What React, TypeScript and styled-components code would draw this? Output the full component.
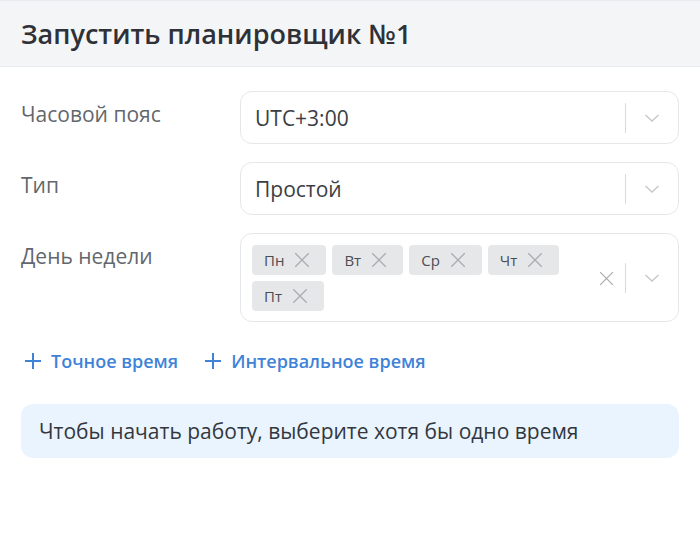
import React from "react";
import styled, {createGlobalStyle} from "styled-components";

const GlobalStyle = createGlobalStyle`
  html, body {
    margin: 0;
    padding: 0;
    background: #fff;
    font-family: "Open Sans", "Noto Sans", sans-serif;
  }
`

const Wrapper = styled.div`
  width: 700px;
  height: 536px;
  overflow: hidden;
  background: #fff;
`

const Header = styled.div`
  height: 67px;
  box-sizing: border-box;
  background: #f4f5f7;
  border-top: 1px solid #e9ebee;
  border-bottom: 1px solid #e8eaed;
  padding-left: 21px;
  display: flex;
  align-items: center;
`

const Title = styled.h1`
  margin: 0;
  font-size: 27px;
  font-weight: 600;
  color: #2e3238;
`

const Content = styled.div`
  padding: 24px 21px 0;
`

const Form = styled.div`
  display: flex;
  flex-direction: column;
  gap: 18px;
`

const Row = styled.div`
  display: grid;
  grid-template-columns: 219px 1fr;
`

const Label = styled.label`
  font-size: 21px;
  line-height: 27px;
  padding-top: 10px;
  color: #63676c;
`

const Control = styled.div<{$multi?: boolean}>`
  min-height: 53px;
  box-sizing: border-box;
  border: 1px solid #e5e7ea;
  border-radius: 12px;
  display: flex;
  align-items: center;
  padding: ${props => (props.$multi ? "11px 0 10px 11px" : "0 0 0 14px")};
`

const Value = styled.div`
  flex: 1;
  font-size: 21px;
  color: #3a3e44;
`

const Tags = styled.div`
  flex: 1;
  display: flex;
  flex-wrap: wrap;
  gap: 6px;
`

const Tag = styled.div`
  height: 30px;
  box-sizing: border-box;
  background: #e6e7e9;
  border-radius: 4px;
  padding: 0 15px 1px 12px;
  display: flex;
  align-items: center;
  gap: 9px;
  font-size: 15px;
  color: #4a4e54;
`

const Indicators = styled.div`
  display: flex;
  align-items: center;
  padding-right: 18px;
`

const Divider = styled.span`
  width: 1px;
  height: 30px;
  background: #d9dbde;
  margin: 0 18px 0 10px;
`

const Actions = styled.div`
  display: flex;
  gap: 26px;
  margin-top: 27px;
  padding-left: 3px;
`

const AddButton = styled.button`
  border: none;
  background: none;
  padding: 0;
  display: flex;
  align-items: center;
  gap: 9px;
  font-family: inherit;
  font-size: 18px;
  line-height: 24px;
  font-weight: 600;
  color: #3f83d8;
`

const Notice = styled.div`
  margin-top: 31px;
  height: 54px;
  border-radius: 12px;
  background: #eaf4fe;
  padding-left: 18px;
  display: flex;
  align-items: center;
  font-size: 21px;
  color: #33373d;
`

const Cross = ({size}: {size: number}) => (
    <svg width={size} height={size} viewBox="0 0 16 16" fill="none" stroke="#a9acb0" strokeWidth="1.2">
        <path d="M2 2 14 14M14 2 2 14"/>
    </svg>
)

const Chevron = () => (
    <svg width="16" height="10" viewBox="0 0 16 10" fill="none" stroke="#c4c7cb" strokeWidth="1.3">
        <path d="M1.5 2 8 8 14.5 2"/>
    </svg>
)

const Plus = () => (
    <svg width="18" height="18" viewBox="0 0 18 18" fill="none" stroke="#3f83d8" strokeWidth="2">
        <path d="M9 1V17M1 9H17"/>
    </svg>
)

const days = ["Пн", "Вт", "Ср", "Чт", "Пт"];

const App = () => {
    return (
        <Wrapper>
            <GlobalStyle/>
            <Header>
                <Title>Запустить планировщик №1</Title>
            </Header>
            <Content>
                <Form>
                    <Row>
                        <Label>Часовой пояс</Label>
                        <Control>
                            <Value>UTC+3:00</Value>
                            <Indicators><Divider/><Chevron/></Indicators>
                        </Control>
                    </Row>
                    <Row>
                        <Label>Тип</Label>
                        <Control>
                            <Value>Простой</Value>
                            <Indicators><Divider/><Chevron/></Indicators>
                        </Control>
                    </Row>
                    <Row>
                        <Label>День недели</Label>
                        <Control $multi>
                            <Tags>
                                {days.map(day => (
                                    <Tag key={day}>{day}<Cross size={18}/></Tag>
                                ))}
                            </Tags>
                            <Indicators><Cross size={17}/><Divider/><Chevron/></Indicators>
                        </Control>
                    </Row>
                </Form>
                <Actions>
                    <AddButton><Plus/>Точное время</AddButton>
                    <AddButton><Plus/>Интервальное время</AddButton>
                </Actions>
                <Notice>Чтобы начать работу, выберите хотя бы одно время</Notice>
            </Content>
        </Wrapper>
    )
}

export default App;
